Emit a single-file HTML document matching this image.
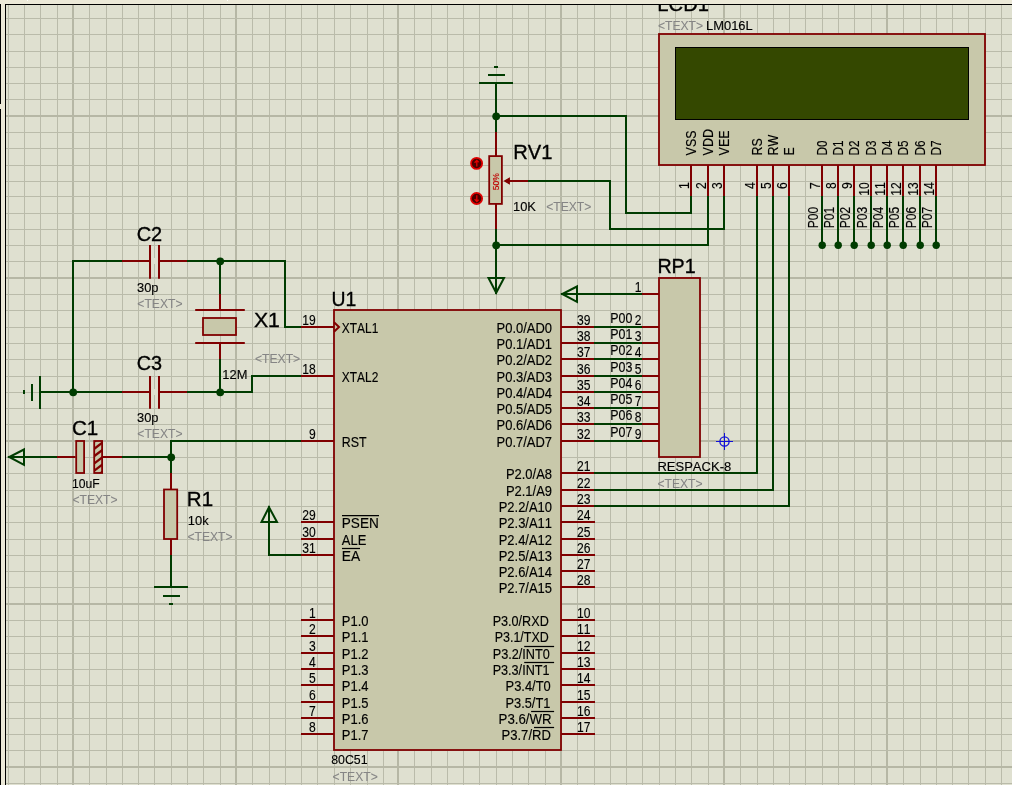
<!DOCTYPE html>
<html><head><meta charset="utf-8"><title>schematic</title>
<style>
html,body{margin:0;padding:0;background:#fff;}
body{width:1012px;height:787px;overflow:hidden;position:relative;font-family:"Liberation Sans", sans-serif;}
#frame{position:absolute;left:0;top:0;width:1012px;height:785px;background:#ece9d8;}
#sheet{position:absolute;left:5px;top:4px;width:1007px;height:781px;background:#dfe0d0;border-left:1px solid #000;border-top:1px solid #000;box-sizing:border-box;}
.lb{position:absolute;left:0;width:1px;background:#000;}
.tk{position:absolute;top:0;width:1px;height:1px;background:#fff;}
svg{position:absolute;left:0;top:0;filter:blur(0.35px);}
svg text{font-family:"Liberation Sans", sans-serif;font-kerning:none;}
</style></head><body>
<div id="frame"></div>
<div class="lb" style="top:4px;height:100px"></div>
<div class="lb" style="top:109px;height:676px"></div>
<div class="tk" style="left:27px"></div><div class="tk" style="left:227px"></div>
<div id="sheet"></div>
<svg width="1012" height="785" viewBox="0 0 1012 785">
<defs><clipPath id="cp"><rect x="6" y="5" width="1006" height="780"/></clipPath></defs>
<g clip-path="url(#cp)">
<line x1="8.5" y1="5" x2="8.5" y2="785" stroke="#babbaa" stroke-width="1" />
<line x1="24.5" y1="5" x2="24.5" y2="785" stroke="#babbaa" stroke-width="1" />
<line x1="40.5" y1="5" x2="40.5" y2="785" stroke="#babbaa" stroke-width="1" />
<line x1="57.5" y1="5" x2="57.5" y2="785" stroke="#babbaa" stroke-width="1" />
<line x1="73" y1="5" x2="73" y2="785" stroke="#b6b7a5" stroke-width="2" />
<line x1="89.5" y1="5" x2="89.5" y2="785" stroke="#babbaa" stroke-width="1" />
<line x1="106.5" y1="5" x2="106.5" y2="785" stroke="#babbaa" stroke-width="1" />
<line x1="122.5" y1="5" x2="122.5" y2="785" stroke="#babbaa" stroke-width="1" />
<line x1="138.5" y1="5" x2="138.5" y2="785" stroke="#babbaa" stroke-width="1" />
<line x1="154.5" y1="5" x2="154.5" y2="785" stroke="#babbaa" stroke-width="1" />
<line x1="171.5" y1="5" x2="171.5" y2="785" stroke="#babbaa" stroke-width="1" />
<line x1="187.5" y1="5" x2="187.5" y2="785" stroke="#babbaa" stroke-width="1" />
<line x1="203.5" y1="5" x2="203.5" y2="785" stroke="#babbaa" stroke-width="1" />
<line x1="220.5" y1="5" x2="220.5" y2="785" stroke="#babbaa" stroke-width="1" />
<line x1="236" y1="5" x2="236" y2="785" stroke="#b6b7a5" stroke-width="2" />
<line x1="252.5" y1="5" x2="252.5" y2="785" stroke="#babbaa" stroke-width="1" />
<line x1="269.5" y1="5" x2="269.5" y2="785" stroke="#babbaa" stroke-width="1" />
<line x1="285.5" y1="5" x2="285.5" y2="785" stroke="#babbaa" stroke-width="1" />
<line x1="301.5" y1="5" x2="301.5" y2="785" stroke="#babbaa" stroke-width="1" />
<line x1="317.5" y1="5" x2="317.5" y2="785" stroke="#babbaa" stroke-width="1" />
<line x1="334.5" y1="5" x2="334.5" y2="785" stroke="#babbaa" stroke-width="1" />
<line x1="350.5" y1="5" x2="350.5" y2="785" stroke="#babbaa" stroke-width="1" />
<line x1="367.5" y1="5" x2="367.5" y2="785" stroke="#babbaa" stroke-width="1" />
<line x1="383.5" y1="5" x2="383.5" y2="785" stroke="#babbaa" stroke-width="1" />
<line x1="398" y1="5" x2="398" y2="785" stroke="#b6b7a5" stroke-width="2" />
<line x1="414.5" y1="5" x2="414.5" y2="785" stroke="#babbaa" stroke-width="1" />
<line x1="431.5" y1="5" x2="431.5" y2="785" stroke="#babbaa" stroke-width="1" />
<line x1="447.5" y1="5" x2="447.5" y2="785" stroke="#babbaa" stroke-width="1" />
<line x1="463.5" y1="5" x2="463.5" y2="785" stroke="#babbaa" stroke-width="1" />
<line x1="479.5" y1="5" x2="479.5" y2="785" stroke="#babbaa" stroke-width="1" />
<line x1="496.5" y1="5" x2="496.5" y2="785" stroke="#babbaa" stroke-width="1" />
<line x1="512.5" y1="5" x2="512.5" y2="785" stroke="#babbaa" stroke-width="1" />
<line x1="528.5" y1="5" x2="528.5" y2="785" stroke="#babbaa" stroke-width="1" />
<line x1="545.5" y1="5" x2="545.5" y2="785" stroke="#babbaa" stroke-width="1" />
<line x1="561" y1="5" x2="561" y2="785" stroke="#b6b7a5" stroke-width="2" />
<line x1="577.5" y1="5" x2="577.5" y2="785" stroke="#babbaa" stroke-width="1" />
<line x1="594.5" y1="5" x2="594.5" y2="785" stroke="#babbaa" stroke-width="1" />
<line x1="610.5" y1="5" x2="610.5" y2="785" stroke="#babbaa" stroke-width="1" />
<line x1="626.5" y1="5" x2="626.5" y2="785" stroke="#babbaa" stroke-width="1" />
<line x1="642.5" y1="5" x2="642.5" y2="785" stroke="#babbaa" stroke-width="1" />
<line x1="659.5" y1="5" x2="659.5" y2="785" stroke="#babbaa" stroke-width="1" />
<line x1="675.5" y1="5" x2="675.5" y2="785" stroke="#babbaa" stroke-width="1" />
<line x1="691.5" y1="5" x2="691.5" y2="785" stroke="#babbaa" stroke-width="1" />
<line x1="708.5" y1="5" x2="708.5" y2="785" stroke="#babbaa" stroke-width="1" />
<line x1="724" y1="5" x2="724" y2="785" stroke="#b6b7a5" stroke-width="2" />
<line x1="740.5" y1="5" x2="740.5" y2="785" stroke="#babbaa" stroke-width="1" />
<line x1="757.5" y1="5" x2="757.5" y2="785" stroke="#babbaa" stroke-width="1" />
<line x1="773.5" y1="5" x2="773.5" y2="785" stroke="#babbaa" stroke-width="1" />
<line x1="789.5" y1="5" x2="789.5" y2="785" stroke="#babbaa" stroke-width="1" />
<line x1="805.5" y1="5" x2="805.5" y2="785" stroke="#babbaa" stroke-width="1" />
<line x1="822.5" y1="5" x2="822.5" y2="785" stroke="#babbaa" stroke-width="1" />
<line x1="838.5" y1="5" x2="838.5" y2="785" stroke="#babbaa" stroke-width="1" />
<line x1="854.5" y1="5" x2="854.5" y2="785" stroke="#babbaa" stroke-width="1" />
<line x1="871.5" y1="5" x2="871.5" y2="785" stroke="#babbaa" stroke-width="1" />
<line x1="887" y1="5" x2="887" y2="785" stroke="#b6b7a5" stroke-width="2" />
<line x1="903.5" y1="5" x2="903.5" y2="785" stroke="#babbaa" stroke-width="1" />
<line x1="920.5" y1="5" x2="920.5" y2="785" stroke="#babbaa" stroke-width="1" />
<line x1="936.5" y1="5" x2="936.5" y2="785" stroke="#babbaa" stroke-width="1" />
<line x1="952.5" y1="5" x2="952.5" y2="785" stroke="#babbaa" stroke-width="1" />
<line x1="968.5" y1="5" x2="968.5" y2="785" stroke="#babbaa" stroke-width="1" />
<line x1="985.5" y1="5" x2="985.5" y2="785" stroke="#babbaa" stroke-width="1" />
<line x1="1001.5" y1="5" x2="1001.5" y2="785" stroke="#babbaa" stroke-width="1" />
<line x1="6" y1="18.5" x2="1012" y2="18.5" stroke="#babbaa" stroke-width="1" />
<line x1="6" y1="34.5" x2="1012" y2="34.5" stroke="#babbaa" stroke-width="1" />
<line x1="6" y1="51.5" x2="1012" y2="51.5" stroke="#babbaa" stroke-width="1" />
<line x1="6" y1="67.5" x2="1012" y2="67.5" stroke="#babbaa" stroke-width="1" />
<line x1="6" y1="83.5" x2="1012" y2="83.5" stroke="#babbaa" stroke-width="1" />
<line x1="6" y1="99.5" x2="1012" y2="99.5" stroke="#babbaa" stroke-width="1" />
<line x1="6" y1="116" x2="1012" y2="116" stroke="#b6b7a5" stroke-width="2" />
<line x1="6" y1="132.5" x2="1012" y2="132.5" stroke="#babbaa" stroke-width="1" />
<line x1="6" y1="148.5" x2="1012" y2="148.5" stroke="#babbaa" stroke-width="1" />
<line x1="6" y1="165.5" x2="1012" y2="165.5" stroke="#babbaa" stroke-width="1" />
<line x1="6" y1="181.5" x2="1012" y2="181.5" stroke="#babbaa" stroke-width="1" />
<line x1="6" y1="196.5" x2="1012" y2="196.5" stroke="#babbaa" stroke-width="1" />
<line x1="6" y1="213.5" x2="1012" y2="213.5" stroke="#babbaa" stroke-width="1" />
<line x1="6" y1="229.5" x2="1012" y2="229.5" stroke="#babbaa" stroke-width="1" />
<line x1="6" y1="245.5" x2="1012" y2="245.5" stroke="#babbaa" stroke-width="1" />
<line x1="6" y1="261.5" x2="1012" y2="261.5" stroke="#babbaa" stroke-width="1" />
<line x1="6" y1="278" x2="1012" y2="278" stroke="#b6b7a5" stroke-width="2" />
<line x1="6" y1="294.5" x2="1012" y2="294.5" stroke="#babbaa" stroke-width="1" />
<line x1="6" y1="310.5" x2="1012" y2="310.5" stroke="#babbaa" stroke-width="1" />
<line x1="6" y1="327.5" x2="1012" y2="327.5" stroke="#babbaa" stroke-width="1" />
<line x1="6" y1="343.5" x2="1012" y2="343.5" stroke="#babbaa" stroke-width="1" />
<line x1="6" y1="359.5" x2="1012" y2="359.5" stroke="#babbaa" stroke-width="1" />
<line x1="6" y1="376.5" x2="1012" y2="376.5" stroke="#babbaa" stroke-width="1" />
<line x1="6" y1="392.5" x2="1012" y2="392.5" stroke="#babbaa" stroke-width="1" />
<line x1="6" y1="408.5" x2="1012" y2="408.5" stroke="#babbaa" stroke-width="1" />
<line x1="6" y1="424.5" x2="1012" y2="424.5" stroke="#babbaa" stroke-width="1" />
<line x1="6" y1="441" x2="1012" y2="441" stroke="#b6b7a5" stroke-width="2" />
<line x1="6" y1="457.5" x2="1012" y2="457.5" stroke="#babbaa" stroke-width="1" />
<line x1="6" y1="473.5" x2="1012" y2="473.5" stroke="#babbaa" stroke-width="1" />
<line x1="6" y1="490.5" x2="1012" y2="490.5" stroke="#babbaa" stroke-width="1" />
<line x1="6" y1="506.5" x2="1012" y2="506.5" stroke="#babbaa" stroke-width="1" />
<line x1="6" y1="522.5" x2="1012" y2="522.5" stroke="#babbaa" stroke-width="1" />
<line x1="6" y1="539.5" x2="1012" y2="539.5" stroke="#babbaa" stroke-width="1" />
<line x1="6" y1="555.5" x2="1012" y2="555.5" stroke="#babbaa" stroke-width="1" />
<line x1="6" y1="571.5" x2="1012" y2="571.5" stroke="#babbaa" stroke-width="1" />
<line x1="6" y1="587.5" x2="1012" y2="587.5" stroke="#babbaa" stroke-width="1" />
<line x1="6" y1="604" x2="1012" y2="604" stroke="#b6b7a5" stroke-width="2" />
<line x1="6" y1="620.5" x2="1012" y2="620.5" stroke="#babbaa" stroke-width="1" />
<line x1="6" y1="636.5" x2="1012" y2="636.5" stroke="#babbaa" stroke-width="1" />
<line x1="6" y1="653.5" x2="1012" y2="653.5" stroke="#babbaa" stroke-width="1" />
<line x1="6" y1="669.5" x2="1012" y2="669.5" stroke="#babbaa" stroke-width="1" />
<line x1="6" y1="685.5" x2="1012" y2="685.5" stroke="#babbaa" stroke-width="1" />
<line x1="6" y1="702.5" x2="1012" y2="702.5" stroke="#babbaa" stroke-width="1" />
<line x1="6" y1="718.5" x2="1012" y2="718.5" stroke="#babbaa" stroke-width="1" />
<line x1="6" y1="734.5" x2="1012" y2="734.5" stroke="#babbaa" stroke-width="1" />
<line x1="6" y1="750.5" x2="1012" y2="750.5" stroke="#babbaa" stroke-width="1" />
<line x1="6" y1="767" x2="1012" y2="767" stroke="#b6b7a5" stroke-width="2" />
<line x1="6" y1="783.5" x2="1012" y2="783.5" stroke="#babbaa" stroke-width="1" />
<rect x="334" y="310" width="227" height="440" fill="#c8c8aa" stroke="#800000" stroke-width="1.8"/>
<rect x="659" y="34" width="326" height="131" fill="#c8c8aa" stroke="#800000" stroke-width="1.8"/>
<rect x="675.5" y="47.5" width="293.0" height="72.0" fill="#344800" stroke="#000" stroke-width="1"/>
<rect x="659" y="278" width="41" height="179" fill="#c8c8aa" stroke="#800000" stroke-width="1.8"/>
<line x1="301" y1="327" x2="334" y2="327" stroke="#800000" stroke-width="2" />
<text transform="translate(315.7,324.9) scale(0.83,1)" font-size="14.6" fill="#000" text-anchor="end" stroke="#000" stroke-width="0.15" >19</text>
<text transform="translate(341.8,332.9) scale(0.865,1)" font-size="13.8" fill="#000" text-anchor="start" stroke="#000" stroke-width="0.15" id="L19">XTAL1</text>
<line x1="301" y1="376" x2="334" y2="376" stroke="#800000" stroke-width="2" />
<text transform="translate(315.7,373.9) scale(0.83,1)" font-size="14.6" fill="#000" text-anchor="end" stroke="#000" stroke-width="0.15" >18</text>
<text transform="translate(341.8,381.9) scale(0.865,1)" font-size="13.8" fill="#000" text-anchor="start" stroke="#000" stroke-width="0.15" id="L18">XTAL2</text>
<line x1="301" y1="441" x2="334" y2="441" stroke="#800000" stroke-width="2" />
<text transform="translate(315.7,438.9) scale(0.83,1)" font-size="14.6" fill="#000" text-anchor="end" stroke="#000" stroke-width="0.15" >9</text>
<text transform="translate(341.8,446.9) scale(0.9,1)" font-size="13.8" fill="#000" text-anchor="start" stroke="#000" stroke-width="0.15" id="L9">RST</text>
<line x1="301" y1="522" x2="334" y2="522" stroke="#800000" stroke-width="2" />
<text transform="translate(315.7,519.9) scale(0.83,1)" font-size="14.6" fill="#000" text-anchor="end" stroke="#000" stroke-width="0.15" >29</text>
<text transform="translate(341.8,527.9) scale(0.985,1)" font-size="13.8" fill="#000" text-anchor="start" stroke="#000" stroke-width="0.15" id="L29">PSEN</text>
<line x1="301" y1="539" x2="334" y2="539" stroke="#800000" stroke-width="2" />
<text transform="translate(315.7,536.9) scale(0.83,1)" font-size="14.6" fill="#000" text-anchor="end" stroke="#000" stroke-width="0.15" >30</text>
<text transform="translate(341.8,544.9) scale(0.94,1)" font-size="13.8" fill="#000" text-anchor="start" stroke="#000" stroke-width="0.15" id="L30">ALE</text>
<line x1="301" y1="555" x2="334" y2="555" stroke="#800000" stroke-width="2" />
<text transform="translate(315.7,552.9) scale(0.83,1)" font-size="14.6" fill="#000" text-anchor="end" stroke="#000" stroke-width="0.15" >31</text>
<text transform="translate(341.8,560.9)" font-size="13.8" fill="#000" text-anchor="start" stroke="#000" stroke-width="0.15" id="L31">EA</text>
<line x1="301" y1="620" x2="334" y2="620" stroke="#800000" stroke-width="2" />
<text transform="translate(315.7,617.9) scale(0.83,1)" font-size="14.6" fill="#000" text-anchor="end" stroke="#000" stroke-width="0.15" >1</text>
<text transform="translate(341.8,625.9) scale(0.94,1)" font-size="13.8" fill="#000" text-anchor="start" stroke="#000" stroke-width="0.15" id="L1">P1.0</text>
<line x1="301" y1="636" x2="334" y2="636" stroke="#800000" stroke-width="2" />
<text transform="translate(315.7,633.9) scale(0.83,1)" font-size="14.6" fill="#000" text-anchor="end" stroke="#000" stroke-width="0.15" >2</text>
<text transform="translate(341.8,641.9) scale(0.94,1)" font-size="13.8" fill="#000" text-anchor="start" stroke="#000" stroke-width="0.15" id="L2">P1.1</text>
<line x1="301" y1="653" x2="334" y2="653" stroke="#800000" stroke-width="2" />
<text transform="translate(315.7,650.9) scale(0.83,1)" font-size="14.6" fill="#000" text-anchor="end" stroke="#000" stroke-width="0.15" >3</text>
<text transform="translate(341.8,658.9) scale(0.94,1)" font-size="13.8" fill="#000" text-anchor="start" stroke="#000" stroke-width="0.15" id="L3">P1.2</text>
<line x1="301" y1="669" x2="334" y2="669" stroke="#800000" stroke-width="2" />
<text transform="translate(315.7,666.9) scale(0.83,1)" font-size="14.6" fill="#000" text-anchor="end" stroke="#000" stroke-width="0.15" >4</text>
<text transform="translate(341.8,674.9) scale(0.94,1)" font-size="13.8" fill="#000" text-anchor="start" stroke="#000" stroke-width="0.15" id="L4">P1.3</text>
<line x1="301" y1="685" x2="334" y2="685" stroke="#800000" stroke-width="2" />
<text transform="translate(315.7,682.9) scale(0.83,1)" font-size="14.6" fill="#000" text-anchor="end" stroke="#000" stroke-width="0.15" >5</text>
<text transform="translate(341.8,690.9) scale(0.94,1)" font-size="13.8" fill="#000" text-anchor="start" stroke="#000" stroke-width="0.15" id="L5">P1.4</text>
<line x1="301" y1="702" x2="334" y2="702" stroke="#800000" stroke-width="2" />
<text transform="translate(315.7,699.9) scale(0.83,1)" font-size="14.6" fill="#000" text-anchor="end" stroke="#000" stroke-width="0.15" >6</text>
<text transform="translate(341.8,707.9) scale(0.94,1)" font-size="13.8" fill="#000" text-anchor="start" stroke="#000" stroke-width="0.15" id="L6">P1.5</text>
<line x1="301" y1="718" x2="334" y2="718" stroke="#800000" stroke-width="2" />
<text transform="translate(315.7,715.9) scale(0.83,1)" font-size="14.6" fill="#000" text-anchor="end" stroke="#000" stroke-width="0.15" >7</text>
<text transform="translate(341.8,723.9) scale(0.94,1)" font-size="13.8" fill="#000" text-anchor="start" stroke="#000" stroke-width="0.15" id="L7">P1.6</text>
<line x1="301" y1="734" x2="334" y2="734" stroke="#800000" stroke-width="2" />
<text transform="translate(315.7,731.9) scale(0.83,1)" font-size="14.6" fill="#000" text-anchor="end" stroke="#000" stroke-width="0.15" >8</text>
<text transform="translate(341.8,739.9) scale(0.94,1)" font-size="13.8" fill="#000" text-anchor="start" stroke="#000" stroke-width="0.15" id="L8">P1.7</text>
<line x1="561" y1="327" x2="595" y2="327" stroke="#800000" stroke-width="2" />
<text transform="translate(577.0,324.9) scale(0.83,1)" font-size="14.6" fill="#000" text-anchor="start" stroke="#000" stroke-width="0.15" >39</text>
<text transform="translate(552.0,332.9) scale(0.94,1)" font-size="13.8" fill="#000" text-anchor="end" stroke="#000" stroke-width="0.15" id="R39">P0.0/AD0</text>
<line x1="561" y1="343" x2="595" y2="343" stroke="#800000" stroke-width="2" />
<text transform="translate(577.0,340.9) scale(0.83,1)" font-size="14.6" fill="#000" text-anchor="start" stroke="#000" stroke-width="0.15" >38</text>
<text transform="translate(552.0,348.9) scale(0.94,1)" font-size="13.8" fill="#000" text-anchor="end" stroke="#000" stroke-width="0.15" id="R38">P0.1/AD1</text>
<line x1="561" y1="359" x2="595" y2="359" stroke="#800000" stroke-width="2" />
<text transform="translate(577.0,356.9) scale(0.83,1)" font-size="14.6" fill="#000" text-anchor="start" stroke="#000" stroke-width="0.15" >37</text>
<text transform="translate(552.0,364.9) scale(0.94,1)" font-size="13.8" fill="#000" text-anchor="end" stroke="#000" stroke-width="0.15" id="R37">P0.2/AD2</text>
<line x1="561" y1="376" x2="595" y2="376" stroke="#800000" stroke-width="2" />
<text transform="translate(577.0,373.9) scale(0.83,1)" font-size="14.6" fill="#000" text-anchor="start" stroke="#000" stroke-width="0.15" >36</text>
<text transform="translate(552.0,381.9) scale(0.94,1)" font-size="13.8" fill="#000" text-anchor="end" stroke="#000" stroke-width="0.15" id="R36">P0.3/AD3</text>
<line x1="561" y1="392" x2="595" y2="392" stroke="#800000" stroke-width="2" />
<text transform="translate(577.0,389.9) scale(0.83,1)" font-size="14.6" fill="#000" text-anchor="start" stroke="#000" stroke-width="0.15" >35</text>
<text transform="translate(552.0,397.9) scale(0.94,1)" font-size="13.8" fill="#000" text-anchor="end" stroke="#000" stroke-width="0.15" id="R35">P0.4/AD4</text>
<line x1="561" y1="408" x2="595" y2="408" stroke="#800000" stroke-width="2" />
<text transform="translate(577.0,405.9) scale(0.83,1)" font-size="14.6" fill="#000" text-anchor="start" stroke="#000" stroke-width="0.15" >34</text>
<text transform="translate(552.0,413.9) scale(0.94,1)" font-size="13.8" fill="#000" text-anchor="end" stroke="#000" stroke-width="0.15" id="R34">P0.5/AD5</text>
<line x1="561" y1="424" x2="595" y2="424" stroke="#800000" stroke-width="2" />
<text transform="translate(577.0,421.9) scale(0.83,1)" font-size="14.6" fill="#000" text-anchor="start" stroke="#000" stroke-width="0.15" >33</text>
<text transform="translate(552.0,429.9) scale(0.94,1)" font-size="13.8" fill="#000" text-anchor="end" stroke="#000" stroke-width="0.15" id="R33">P0.6/AD6</text>
<line x1="561" y1="441" x2="595" y2="441" stroke="#800000" stroke-width="2" />
<text transform="translate(577.0,438.9) scale(0.83,1)" font-size="14.6" fill="#000" text-anchor="start" stroke="#000" stroke-width="0.15" >32</text>
<text transform="translate(552.0,446.9) scale(0.94,1)" font-size="13.8" fill="#000" text-anchor="end" stroke="#000" stroke-width="0.15" id="R32">P0.7/AD7</text>
<line x1="561" y1="473" x2="595" y2="473" stroke="#800000" stroke-width="2" />
<text transform="translate(577.0,470.9) scale(0.83,1)" font-size="14.6" fill="#000" text-anchor="start" stroke="#000" stroke-width="0.15" >21</text>
<text transform="translate(552.0,478.9) scale(0.94,1)" font-size="13.8" fill="#000" text-anchor="end" stroke="#000" stroke-width="0.15" id="R21">P2.0/A8</text>
<line x1="561" y1="490" x2="595" y2="490" stroke="#800000" stroke-width="2" />
<text transform="translate(577.0,487.9) scale(0.83,1)" font-size="14.6" fill="#000" text-anchor="start" stroke="#000" stroke-width="0.15" >22</text>
<text transform="translate(552.0,495.9) scale(0.94,1)" font-size="13.8" fill="#000" text-anchor="end" stroke="#000" stroke-width="0.15" id="R22">P2.1/A9</text>
<line x1="561" y1="506" x2="595" y2="506" stroke="#800000" stroke-width="2" />
<text transform="translate(577.0,503.9) scale(0.83,1)" font-size="14.6" fill="#000" text-anchor="start" stroke="#000" stroke-width="0.15" >23</text>
<text transform="translate(552.0,511.9) scale(0.94,1)" font-size="13.8" fill="#000" text-anchor="end" stroke="#000" stroke-width="0.15" id="R23">P2.2/A10</text>
<line x1="561" y1="522" x2="595" y2="522" stroke="#800000" stroke-width="2" />
<text transform="translate(577.0,519.9) scale(0.83,1)" font-size="14.6" fill="#000" text-anchor="start" stroke="#000" stroke-width="0.15" >24</text>
<text transform="translate(552.0,527.9) scale(0.94,1)" font-size="13.8" fill="#000" text-anchor="end" stroke="#000" stroke-width="0.15" id="R24">P2.3/A11</text>
<line x1="561" y1="539" x2="595" y2="539" stroke="#800000" stroke-width="2" />
<text transform="translate(577.0,536.9) scale(0.83,1)" font-size="14.6" fill="#000" text-anchor="start" stroke="#000" stroke-width="0.15" >25</text>
<text transform="translate(552.0,544.9) scale(0.94,1)" font-size="13.8" fill="#000" text-anchor="end" stroke="#000" stroke-width="0.15" id="R25">P2.4/A12</text>
<line x1="561" y1="555" x2="595" y2="555" stroke="#800000" stroke-width="2" />
<text transform="translate(577.0,552.9) scale(0.83,1)" font-size="14.6" fill="#000" text-anchor="start" stroke="#000" stroke-width="0.15" >26</text>
<text transform="translate(552.0,560.9) scale(0.94,1)" font-size="13.8" fill="#000" text-anchor="end" stroke="#000" stroke-width="0.15" id="R26">P2.5/A13</text>
<line x1="561" y1="571" x2="595" y2="571" stroke="#800000" stroke-width="2" />
<text transform="translate(577.0,568.9) scale(0.83,1)" font-size="14.6" fill="#000" text-anchor="start" stroke="#000" stroke-width="0.15" >27</text>
<text transform="translate(552.0,576.9) scale(0.94,1)" font-size="13.8" fill="#000" text-anchor="end" stroke="#000" stroke-width="0.15" id="R27">P2.6/A14</text>
<line x1="561" y1="587" x2="595" y2="587" stroke="#800000" stroke-width="2" />
<text transform="translate(577.0,584.9) scale(0.83,1)" font-size="14.6" fill="#000" text-anchor="start" stroke="#000" stroke-width="0.15" >28</text>
<text transform="translate(552.0,592.9) scale(0.94,1)" font-size="13.8" fill="#000" text-anchor="end" stroke="#000" stroke-width="0.15" id="R28">P2.7/A15</text>
<line x1="561" y1="620" x2="595" y2="620" stroke="#800000" stroke-width="2" />
<text transform="translate(577.0,617.9) scale(0.83,1)" font-size="14.6" fill="#000" text-anchor="start" stroke="#000" stroke-width="0.15" >10</text>
<text transform="translate(492.66,625.9) scale(0.9149,1)" font-size="13.8" fill="#000" text-anchor="start" stroke="#000" stroke-width="0.15" >P3.0/RXD</text>
<line x1="561" y1="636" x2="595" y2="636" stroke="#800000" stroke-width="2" />
<text transform="translate(577.0,633.9) scale(0.83,1)" font-size="14.6" fill="#000" text-anchor="start" stroke="#000" stroke-width="0.15" >11</text>
<text transform="translate(494.78,641.9) scale(0.903,1)" font-size="13.8" fill="#000" text-anchor="start" stroke="#000" stroke-width="0.15" >P3.1/TXD</text>
<line x1="561" y1="653" x2="595" y2="653" stroke="#800000" stroke-width="2" />
<text transform="translate(577.0,650.9) scale(0.83,1)" font-size="14.6" fill="#000" text-anchor="start" stroke="#000" stroke-width="0.15" >12</text>
<text transform="translate(492.66,658.9) scale(0.9213,1)" font-size="13.8" fill="#000" text-anchor="start" stroke="#000" stroke-width="0.15" >P3.2/INT0</text>
<line x1="561" y1="669" x2="595" y2="669" stroke="#800000" stroke-width="2" />
<text transform="translate(577.0,666.9) scale(0.83,1)" font-size="14.6" fill="#000" text-anchor="start" stroke="#000" stroke-width="0.15" >13</text>
<text transform="translate(492.66,674.9) scale(0.9151,1)" font-size="13.8" fill="#000" text-anchor="start" stroke="#000" stroke-width="0.15" >P3.3/INT1</text>
<line x1="561" y1="685" x2="595" y2="685" stroke="#800000" stroke-width="2" />
<text transform="translate(577.0,682.9) scale(0.83,1)" font-size="14.6" fill="#000" text-anchor="start" stroke="#000" stroke-width="0.15" >14</text>
<text transform="translate(505.54,690.9) scale(0.9366,1)" font-size="13.8" fill="#000" text-anchor="start" stroke="#000" stroke-width="0.15" >P3.4/T0</text>
<line x1="561" y1="702" x2="595" y2="702" stroke="#800000" stroke-width="2" />
<text transform="translate(577.0,699.9) scale(0.83,1)" font-size="14.6" fill="#000" text-anchor="start" stroke="#000" stroke-width="0.15" >15</text>
<text transform="translate(505.55,707.9) scale(0.9286,1)" font-size="13.8" fill="#000" text-anchor="start" stroke="#000" stroke-width="0.15" >P3.5/T1</text>
<line x1="561" y1="718" x2="595" y2="718" stroke="#800000" stroke-width="2" />
<text transform="translate(577.0,715.9) scale(0.83,1)" font-size="14.6" fill="#000" text-anchor="start" stroke="#000" stroke-width="0.15" >16</text>
<text transform="translate(498.61,723.9) scale(0.9618,1)" font-size="13.8" fill="#000" text-anchor="start" stroke="#000" stroke-width="0.15" >P3.6/WR</text>
<line x1="561" y1="734" x2="595" y2="734" stroke="#800000" stroke-width="2" />
<text transform="translate(577.0,731.9) scale(0.83,1)" font-size="14.6" fill="#000" text-anchor="start" stroke="#000" stroke-width="0.15" >17</text>
<text transform="translate(501.53,739.9) scale(0.9471,1)" font-size="13.8" fill="#000" text-anchor="start" stroke="#000" stroke-width="0.15" >P3.7/RD</text>
<line x1="342" y1="515.5" x2="379" y2="515.5" stroke="#000" stroke-width="1.25" />
<line x1="342" y1="548.5" x2="360" y2="548.5" stroke="#000" stroke-width="1.25" />
<line x1="524.2" y1="646.5" x2="554.1" y2="646.5" stroke="#000" stroke-width="1.25" />
<line x1="524.2" y1="662.5" x2="554.1" y2="662.5" stroke="#000" stroke-width="1.25" />
<line x1="531.1" y1="711.5" x2="554.1" y2="711.5" stroke="#000" stroke-width="1.25" />
<line x1="534.0" y1="727.5" x2="554.1" y2="727.5" stroke="#000" stroke-width="1.25" />
<polyline points="334,322.2 339.0,327 334,331.8" fill="none" stroke="#800000" stroke-width="2" stroke-linejoin="miter"/>
<line x1="594" y1="327" x2="642" y2="327" stroke="#003c00" stroke-width="2" />
<line x1="642" y1="327" x2="659" y2="327" stroke="#800000" stroke-width="2" />
<text transform="translate(610.3,323.4) scale(0.9,1)" font-size="13.8" fill="#000" text-anchor="start" stroke="#000" stroke-width="0.15" >P00</text>
<text transform="translate(641.6,324.6) scale(0.83,1)" font-size="14.6" fill="#000" text-anchor="end" stroke="#000" stroke-width="0.15" >2</text>
<line x1="594" y1="343" x2="642" y2="343" stroke="#003c00" stroke-width="2" />
<line x1="642" y1="343" x2="659" y2="343" stroke="#800000" stroke-width="2" />
<text transform="translate(610.3,339.4) scale(0.9,1)" font-size="13.8" fill="#000" text-anchor="start" stroke="#000" stroke-width="0.15" >P01</text>
<text transform="translate(641.6,340.6) scale(0.83,1)" font-size="14.6" fill="#000" text-anchor="end" stroke="#000" stroke-width="0.15" >3</text>
<line x1="594" y1="359" x2="642" y2="359" stroke="#003c00" stroke-width="2" />
<line x1="642" y1="359" x2="659" y2="359" stroke="#800000" stroke-width="2" />
<text transform="translate(610.3,355.4) scale(0.9,1)" font-size="13.8" fill="#000" text-anchor="start" stroke="#000" stroke-width="0.15" >P02</text>
<text transform="translate(641.6,356.6) scale(0.83,1)" font-size="14.6" fill="#000" text-anchor="end" stroke="#000" stroke-width="0.15" >4</text>
<line x1="594" y1="376" x2="642" y2="376" stroke="#003c00" stroke-width="2" />
<line x1="642" y1="376" x2="659" y2="376" stroke="#800000" stroke-width="2" />
<text transform="translate(610.3,372.4) scale(0.9,1)" font-size="13.8" fill="#000" text-anchor="start" stroke="#000" stroke-width="0.15" >P03</text>
<text transform="translate(641.6,373.6) scale(0.83,1)" font-size="14.6" fill="#000" text-anchor="end" stroke="#000" stroke-width="0.15" >5</text>
<line x1="594" y1="392" x2="642" y2="392" stroke="#003c00" stroke-width="2" />
<line x1="642" y1="392" x2="659" y2="392" stroke="#800000" stroke-width="2" />
<text transform="translate(610.3,388.4) scale(0.9,1)" font-size="13.8" fill="#000" text-anchor="start" stroke="#000" stroke-width="0.15" >P04</text>
<text transform="translate(641.6,389.6) scale(0.83,1)" font-size="14.6" fill="#000" text-anchor="end" stroke="#000" stroke-width="0.15" >6</text>
<line x1="594" y1="408" x2="642" y2="408" stroke="#003c00" stroke-width="2" />
<line x1="642" y1="408" x2="659" y2="408" stroke="#800000" stroke-width="2" />
<text transform="translate(610.3,404.4) scale(0.9,1)" font-size="13.8" fill="#000" text-anchor="start" stroke="#000" stroke-width="0.15" >P05</text>
<text transform="translate(641.6,405.6) scale(0.83,1)" font-size="14.6" fill="#000" text-anchor="end" stroke="#000" stroke-width="0.15" >7</text>
<line x1="594" y1="424" x2="642" y2="424" stroke="#003c00" stroke-width="2" />
<line x1="642" y1="424" x2="659" y2="424" stroke="#800000" stroke-width="2" />
<text transform="translate(610.3,420.4) scale(0.9,1)" font-size="13.8" fill="#000" text-anchor="start" stroke="#000" stroke-width="0.15" >P06</text>
<text transform="translate(641.6,421.6) scale(0.83,1)" font-size="14.6" fill="#000" text-anchor="end" stroke="#000" stroke-width="0.15" >8</text>
<line x1="594" y1="441" x2="642" y2="441" stroke="#003c00" stroke-width="2" />
<line x1="642" y1="441" x2="659" y2="441" stroke="#800000" stroke-width="2" />
<text transform="translate(610.3,437.4) scale(0.9,1)" font-size="13.8" fill="#000" text-anchor="start" stroke="#000" stroke-width="0.15" >P07</text>
<text transform="translate(641.6,438.6) scale(0.83,1)" font-size="14.6" fill="#000" text-anchor="end" stroke="#000" stroke-width="0.15" >9</text>
<line x1="642" y1="294" x2="659" y2="294" stroke="#800000" stroke-width="2" />
<line x1="561" y1="294" x2="642" y2="294" stroke="#003c00" stroke-width="2" />
<polygon points="577,286.5 562.2,294 577,301.8" fill="none" stroke="#003c00" stroke-width="2" stroke-linejoin="miter"/>
<text transform="translate(641.6,291.6) scale(0.83,1)" font-size="14.6" fill="#000" text-anchor="end" stroke="#000" stroke-width="0.15" >1</text>
<polyline points="594,473 757,473 757,196" fill="none" stroke="#003c00" stroke-width="2" stroke-linejoin="miter"/>
<polyline points="594,490 773,490 773,196" fill="none" stroke="#003c00" stroke-width="2" stroke-linejoin="miter"/>
<polyline points="594,506 789,506 789,196" fill="none" stroke="#003c00" stroke-width="2" stroke-linejoin="miter"/>
<line x1="691" y1="165" x2="691" y2="196" stroke="#800000" stroke-width="2" />
<text transform="translate(688.7,182.3) rotate(-90) scale(0.83,1)" font-size="14.6" fill="#000" text-anchor="end" stroke="#000" stroke-width="0.15" >1</text>
<text transform="translate(695.9,155.4) rotate(-90) scale(0.905,1)" font-size="13.8" fill="#000" text-anchor="start" stroke="#000" stroke-width="0.15" >VSS</text>
<line x1="708" y1="165" x2="708" y2="196" stroke="#800000" stroke-width="2" />
<text transform="translate(705.7,182.3) rotate(-90) scale(0.83,1)" font-size="14.6" fill="#000" text-anchor="end" stroke="#000" stroke-width="0.15" >2</text>
<text transform="translate(712.9,155.4) rotate(-90) scale(0.905,1)" font-size="13.8" fill="#000" text-anchor="start" stroke="#000" stroke-width="0.15" >VDD</text>
<line x1="724" y1="165" x2="724" y2="196" stroke="#800000" stroke-width="2" />
<text transform="translate(721.7,182.3) rotate(-90) scale(0.83,1)" font-size="14.6" fill="#000" text-anchor="end" stroke="#000" stroke-width="0.15" >3</text>
<text transform="translate(728.9,155.4) rotate(-90) scale(0.905,1)" font-size="13.8" fill="#000" text-anchor="start" stroke="#000" stroke-width="0.15" >VEE</text>
<line x1="757" y1="165" x2="757" y2="196" stroke="#800000" stroke-width="2" />
<text transform="translate(754.7,182.3) rotate(-90) scale(0.83,1)" font-size="14.6" fill="#000" text-anchor="end" stroke="#000" stroke-width="0.15" >4</text>
<text transform="translate(761.9,155.4) rotate(-90) scale(0.905,1)" font-size="13.8" fill="#000" text-anchor="start" stroke="#000" stroke-width="0.15" >RS</text>
<line x1="773" y1="165" x2="773" y2="196" stroke="#800000" stroke-width="2" />
<text transform="translate(770.7,182.3) rotate(-90) scale(0.83,1)" font-size="14.6" fill="#000" text-anchor="end" stroke="#000" stroke-width="0.15" >5</text>
<text transform="translate(777.9,155.4) rotate(-90) scale(0.905,1)" font-size="13.8" fill="#000" text-anchor="start" stroke="#000" stroke-width="0.15" >RW</text>
<line x1="789" y1="165" x2="789" y2="196" stroke="#800000" stroke-width="2" />
<text transform="translate(786.7,182.3) rotate(-90) scale(0.83,1)" font-size="14.6" fill="#000" text-anchor="end" stroke="#000" stroke-width="0.15" >6</text>
<text transform="translate(793.9,155.4) rotate(-90) scale(0.905,1)" font-size="13.8" fill="#000" text-anchor="start" stroke="#000" stroke-width="0.15" >E</text>
<line x1="822" y1="165" x2="822" y2="196" stroke="#800000" stroke-width="2" />
<text transform="translate(819.7,182.3) rotate(-90) scale(0.83,1)" font-size="14.6" fill="#000" text-anchor="end" stroke="#000" stroke-width="0.15" >7</text>
<text transform="translate(826.9,155.4) rotate(-90) scale(0.85,1)" font-size="13.8" fill="#000" text-anchor="start" stroke="#000" stroke-width="0.15" >D0</text>
<line x1="838" y1="165" x2="838" y2="196" stroke="#800000" stroke-width="2" />
<text transform="translate(835.7,182.3) rotate(-90) scale(0.83,1)" font-size="14.6" fill="#000" text-anchor="end" stroke="#000" stroke-width="0.15" >8</text>
<text transform="translate(842.9,155.4) rotate(-90) scale(0.85,1)" font-size="13.8" fill="#000" text-anchor="start" stroke="#000" stroke-width="0.15" >D1</text>
<line x1="854" y1="165" x2="854" y2="196" stroke="#800000" stroke-width="2" />
<text transform="translate(851.7,182.3) rotate(-90) scale(0.83,1)" font-size="14.6" fill="#000" text-anchor="end" stroke="#000" stroke-width="0.15" >9</text>
<text transform="translate(858.9,155.4) rotate(-90) scale(0.85,1)" font-size="13.8" fill="#000" text-anchor="start" stroke="#000" stroke-width="0.15" >D2</text>
<line x1="871" y1="165" x2="871" y2="196" stroke="#800000" stroke-width="2" />
<text transform="translate(868.7,182.3) rotate(-90) scale(0.83,1)" font-size="14.6" fill="#000" text-anchor="end" stroke="#000" stroke-width="0.15" >10</text>
<text transform="translate(875.9,155.4) rotate(-90) scale(0.85,1)" font-size="13.8" fill="#000" text-anchor="start" stroke="#000" stroke-width="0.15" >D3</text>
<line x1="887" y1="165" x2="887" y2="196" stroke="#800000" stroke-width="2" />
<text transform="translate(884.7,182.3) rotate(-90) scale(0.83,1)" font-size="14.6" fill="#000" text-anchor="end" stroke="#000" stroke-width="0.15" >11</text>
<text transform="translate(891.9,155.4) rotate(-90) scale(0.85,1)" font-size="13.8" fill="#000" text-anchor="start" stroke="#000" stroke-width="0.15" >D4</text>
<line x1="903" y1="165" x2="903" y2="196" stroke="#800000" stroke-width="2" />
<text transform="translate(900.7,182.3) rotate(-90) scale(0.83,1)" font-size="14.6" fill="#000" text-anchor="end" stroke="#000" stroke-width="0.15" >12</text>
<text transform="translate(907.9,155.4) rotate(-90) scale(0.85,1)" font-size="13.8" fill="#000" text-anchor="start" stroke="#000" stroke-width="0.15" >D5</text>
<line x1="920" y1="165" x2="920" y2="196" stroke="#800000" stroke-width="2" />
<text transform="translate(917.7,182.3) rotate(-90) scale(0.83,1)" font-size="14.6" fill="#000" text-anchor="end" stroke="#000" stroke-width="0.15" >13</text>
<text transform="translate(924.9,155.4) rotate(-90) scale(0.85,1)" font-size="13.8" fill="#000" text-anchor="start" stroke="#000" stroke-width="0.15" >D6</text>
<line x1="936" y1="165" x2="936" y2="196" stroke="#800000" stroke-width="2" />
<text transform="translate(933.7,182.3) rotate(-90) scale(0.83,1)" font-size="14.6" fill="#000" text-anchor="end" stroke="#000" stroke-width="0.15" >14</text>
<text transform="translate(940.9,155.4) rotate(-90) scale(0.85,1)" font-size="13.8" fill="#000" text-anchor="start" stroke="#000" stroke-width="0.15" >D7</text>
<line x1="822" y1="196" x2="822" y2="245" stroke="#003c00" stroke-width="2" />
<circle cx="822.2" cy="245.3" r="3.7" fill="#003c00"/>
<text transform="translate(817.6,228.2) rotate(-90) scale(0.87,1)" font-size="13.8" fill="#000" text-anchor="start" stroke="#000" stroke-width="0.15" >P00</text>
<line x1="838" y1="196" x2="838" y2="245" stroke="#003c00" stroke-width="2" />
<circle cx="838.2" cy="245.3" r="3.7" fill="#003c00"/>
<text transform="translate(833.6,228.2) rotate(-90) scale(0.87,1)" font-size="13.8" fill="#000" text-anchor="start" stroke="#000" stroke-width="0.15" >P01</text>
<line x1="854" y1="196" x2="854" y2="245" stroke="#003c00" stroke-width="2" />
<circle cx="854.2" cy="245.3" r="3.7" fill="#003c00"/>
<text transform="translate(849.6,228.2) rotate(-90) scale(0.87,1)" font-size="13.8" fill="#000" text-anchor="start" stroke="#000" stroke-width="0.15" >P02</text>
<line x1="871" y1="196" x2="871" y2="245" stroke="#003c00" stroke-width="2" />
<circle cx="871.2" cy="245.3" r="3.7" fill="#003c00"/>
<text transform="translate(866.6,228.2) rotate(-90) scale(0.87,1)" font-size="13.8" fill="#000" text-anchor="start" stroke="#000" stroke-width="0.15" >P03</text>
<line x1="887" y1="196" x2="887" y2="245" stroke="#003c00" stroke-width="2" />
<circle cx="887.2" cy="245.3" r="3.7" fill="#003c00"/>
<text transform="translate(882.6,228.2) rotate(-90) scale(0.87,1)" font-size="13.8" fill="#000" text-anchor="start" stroke="#000" stroke-width="0.15" >P04</text>
<line x1="903" y1="196" x2="903" y2="245" stroke="#003c00" stroke-width="2" />
<circle cx="903.2" cy="245.3" r="3.7" fill="#003c00"/>
<text transform="translate(898.6,228.2) rotate(-90) scale(0.87,1)" font-size="13.8" fill="#000" text-anchor="start" stroke="#000" stroke-width="0.15" >P05</text>
<line x1="920" y1="196" x2="920" y2="245" stroke="#003c00" stroke-width="2" />
<circle cx="920.2" cy="245.3" r="3.7" fill="#003c00"/>
<text transform="translate(915.6,228.2) rotate(-90) scale(0.87,1)" font-size="13.8" fill="#000" text-anchor="start" stroke="#000" stroke-width="0.15" >P06</text>
<line x1="936" y1="196" x2="936" y2="245" stroke="#003c00" stroke-width="2" />
<circle cx="936.2" cy="245.3" r="3.7" fill="#003c00"/>
<text transform="translate(931.6,228.2) rotate(-90) scale(0.87,1)" font-size="13.8" fill="#000" text-anchor="start" stroke="#000" stroke-width="0.15" >P07</text>
<line x1="479" y1="83" x2="513" y2="83" stroke="#003c00" stroke-width="2" />
<line x1="488" y1="75" x2="505" y2="75" stroke="#003c00" stroke-width="2" />
<line x1="494" y1="67" x2="498" y2="67" stroke="#003c00" stroke-width="2" />
<line x1="496" y1="83" x2="496" y2="132" stroke="#003c00" stroke-width="2" />
<line x1="496" y1="132" x2="496" y2="156" stroke="#800000" stroke-width="2" />
<rect x="489.2" y="156.1" width="12.7" height="47.8" fill="#c8c8aa" stroke="#800000" stroke-width="1.8"/>
<line x1="496" y1="204" x2="496" y2="229" stroke="#800000" stroke-width="2" />
<line x1="496" y1="229" x2="496" y2="294" stroke="#003c00" stroke-width="2" />
<polygon points="488.5,278 504,278 496.2,292.8" fill="none" stroke="#003c00" stroke-width="2" stroke-linejoin="miter"/>
<circle cx="496.2" cy="116.3" r="3.9" fill="#003c00"/>
<circle cx="496.2" cy="245.3" r="3.9" fill="#003c00"/>
<line x1="506" y1="181" x2="528" y2="181" stroke="#800000" stroke-width="2" />
<polygon points="509.3,178.2 504.6,181 509.3,183.8" fill="#800000" stroke="#800000" stroke-width="1.2" stroke-linejoin="miter"/>
<polyline points="528,181 610,181 610,229 724,229 724,196" fill="none" stroke="#003c00" stroke-width="2" stroke-linejoin="miter"/>
<polyline points="496,116 626,116 626,213 691,213 691,196" fill="none" stroke="#003c00" stroke-width="2" stroke-linejoin="miter"/>
<polyline points="496,245 708,245 708,196" fill="none" stroke="#003c00" stroke-width="2" stroke-linejoin="miter"/>
<circle cx="476.6" cy="163.4" r="5.6" fill="#4a0000" stroke="#e00000" stroke-width="1.7"/>
<path d="M476.8 166.6 V160.8 M474.6 162.8 L476.8 160.4 L478.6 162.20000000000002" stroke="#e80000" stroke-width="1.3" fill="none"/>
<circle cx="476.6" cy="198.5" r="5.6" fill="#4a0000" stroke="#e00000" stroke-width="1.7"/>
<path d="M476.8 195.3 V201.1 M474.6 199.1 L476.8 201.5 L478.6 199.7" stroke="#e80000" stroke-width="1.3" fill="none"/>
<text transform="translate(499.2,190.2) rotate(-90) scale(0.93,1)" font-size="9.2" fill="#c00000" text-anchor="start" stroke="#c00000" stroke-width="0.15" >50%</text>
<line x1="122" y1="261" x2="187" y2="261" stroke="#800000" stroke-width="2" />
<rect x="150.9" y="258" width="7.2" height="6" fill="#dfe0d0" stroke="none" stroke-width="0"/>
<line x1="150.0" y1="245" x2="150.0" y2="278.8" stroke="#800000" stroke-width="2" />
<line x1="159.0" y1="245" x2="159.0" y2="278.8" stroke="#800000" stroke-width="2" />
<line x1="122" y1="392" x2="187" y2="392" stroke="#800000" stroke-width="2" />
<rect x="150.9" y="389" width="7.2" height="6" fill="#dfe0d0" stroke="none" stroke-width="0"/>
<line x1="150.0" y1="376" x2="150.0" y2="408.8" stroke="#800000" stroke-width="2" />
<line x1="159.0" y1="376" x2="159.0" y2="408.8" stroke="#800000" stroke-width="2" />
<polyline points="122,261 73,261 73,392" fill="none" stroke="#003c00" stroke-width="2" stroke-linejoin="miter"/>
<line x1="40" y1="392" x2="122" y2="392" stroke="#003c00" stroke-width="2" />
<polyline points="187,261 285,261 285,327 301,327" fill="none" stroke="#003c00" stroke-width="2" stroke-linejoin="miter"/>
<polyline points="187,392 252,392 252,376 301,376" fill="none" stroke="#003c00" stroke-width="2" stroke-linejoin="miter"/>
<line x1="40" y1="376" x2="40" y2="409" stroke="#003c00" stroke-width="2" />
<line x1="32" y1="384" x2="32" y2="401" stroke="#003c00" stroke-width="2" />
<line x1="24" y1="390" x2="24" y2="394" stroke="#003c00" stroke-width="2" />
<line x1="220" y1="261" x2="220" y2="294" stroke="#003c00" stroke-width="2" />
<line x1="220" y1="294" x2="220" y2="310" stroke="#800000" stroke-width="2" />
<line x1="220" y1="343" x2="220" y2="359" stroke="#800000" stroke-width="2" />
<line x1="220" y1="359" x2="220" y2="392" stroke="#003c00" stroke-width="2" />
<line x1="195.2" y1="310" x2="244.8" y2="310" stroke="#800000" stroke-width="2" />
<line x1="195.2" y1="343" x2="244.8" y2="343" stroke="#800000" stroke-width="2" />
<rect x="203" y="318" width="33" height="17" fill="#c8c8aa" stroke="#800000" stroke-width="1.8"/>
<circle cx="73.2" cy="392.3" r="3.9" fill="#003c00"/>
<circle cx="220.2" cy="261.3" r="3.9" fill="#003c00"/>
<circle cx="220.2" cy="392.3" r="3.9" fill="#003c00"/>
<polyline points="301,441 171,441 171,473" fill="none" stroke="#003c00" stroke-width="2" stroke-linejoin="miter"/>
<line x1="171" y1="473" x2="171" y2="490" stroke="#800000" stroke-width="2" />
<rect x="164" y="489.5" width="13.2" height="49.5" fill="#c8c8aa" stroke="#800000" stroke-width="1.8"/>
<line x1="171" y1="539" x2="171" y2="555" stroke="#800000" stroke-width="2" />
<line x1="171" y1="555" x2="171" y2="587" stroke="#003c00" stroke-width="2" />
<line x1="154" y1="587" x2="188" y2="587" stroke="#003c00" stroke-width="2" />
<line x1="163" y1="596" x2="180" y2="596" stroke="#003c00" stroke-width="2" />
<line x1="169" y1="604" x2="173" y2="604" stroke="#003c00" stroke-width="2" />
<line x1="122" y1="457" x2="171" y2="457" stroke="#003c00" stroke-width="2" />
<circle cx="171.2" cy="457.3" r="3.9" fill="#003c00"/>
<line x1="102.5" y1="457" x2="122" y2="457" stroke="#800000" stroke-width="2" />
<line x1="57" y1="457" x2="75.6" y2="457" stroke="#800000" stroke-width="2" />
<line x1="8" y1="457" x2="57" y2="457" stroke="#003c00" stroke-width="2" />
<polygon points="24,449.5 9.2,457 24,464.8" fill="none" stroke="#003c00" stroke-width="2" stroke-linejoin="miter"/>
<rect x="76.2" y="441" width="7.9" height="32" fill="#c8c8aa" stroke="#800000" stroke-width="1.8"/>
<defs><clipPath id="hc"><rect x="94.2" y="441" width="7.9" height="32"/></clipPath></defs>
<rect x="94.2" y="441" width="7.9" height="32" fill="#c8c8aa"/>
<g clip-path="url(#hc)">
<line x1="93.0" y1="435.17" x2="103.5" y2="427.19" stroke="#800000" stroke-width="2.3" />
<line x1="93.0" y1="442.47" x2="103.5" y2="434.49" stroke="#800000" stroke-width="2.3" />
<line x1="93.0" y1="449.77" x2="103.5" y2="441.79" stroke="#800000" stroke-width="2.3" />
<line x1="93.0" y1="457.07" x2="103.5" y2="449.09" stroke="#800000" stroke-width="2.3" />
<line x1="93.0" y1="464.37" x2="103.5" y2="456.39" stroke="#800000" stroke-width="2.3" />
<line x1="93.0" y1="471.67" x2="103.5" y2="463.69" stroke="#800000" stroke-width="2.3" />
<line x1="93.0" y1="478.97" x2="103.5" y2="470.99" stroke="#800000" stroke-width="2.3" />
</g>
<rect x="94.2" y="441" width="7.9" height="32" fill="none" stroke="#800000" stroke-width="1.8"/>
<polyline points="301,555 269,555 269,506" fill="none" stroke="#003c00" stroke-width="2" stroke-linejoin="miter"/>
<polygon points="261.5,522 269,507.2 277,522" fill="none" stroke="#003c00" stroke-width="2" stroke-linejoin="miter"/>
<circle cx="724.5" cy="441.5" r="4.6" fill="none" stroke="#1010d8" stroke-width="1.3"/>
<line x1="716.0" y1="441.5" x2="733.0" y2="441.5" stroke="#1010d8" stroke-width="1" />
<line x1="724.5" y1="433.0" x2="724.5" y2="450.0" stroke="#1010d8" stroke-width="1" />
<text transform="translate(331.5,305.5) scale(0.946,1)" font-size="20.5" fill="#000" text-anchor="start"  stroke="#000" stroke-width="0.35">U1</text>
<text transform="translate(513.15,159.4) scale(0.9833,1)" font-size="20.5" fill="#000" text-anchor="start"  stroke="#000" stroke-width="0.35">RV1</text>
<text transform="translate(136.69,240.5) scale(0.9737,1)" font-size="20.5" fill="#000" text-anchor="start"  stroke="#000" stroke-width="0.35">C2</text>
<text transform="translate(136.69,370.4) scale(0.9685,1)" font-size="20.5" fill="#000" text-anchor="start"  stroke="#000" stroke-width="0.35">C3</text>
<text transform="translate(253.92,327.3) scale(1.0357,1)" font-size="20.5" fill="#000" text-anchor="start"  stroke="#000" stroke-width="0.35">X1</text>
<text transform="translate(71.96,435.0) scale(1.0034,1)" font-size="20.5" fill="#000" text-anchor="start"  stroke="#000" stroke-width="0.35">C1</text>
<text transform="translate(186.82,506.1) scale(1.0005,1)" font-size="20.5" fill="#000" text-anchor="start"  stroke="#000" stroke-width="0.35">R1</text>
<text transform="translate(657.39,272.5) scale(0.9596,1)" font-size="20.5" fill="#000" text-anchor="start"  stroke="#000" stroke-width="0.35">RP1</text>
<text transform="translate(657.34,10.6) scale(0.985,1)" font-size="20.5" fill="#000" text-anchor="start"  stroke="#000" stroke-width="0.35">LCD1</text>
<text transform="translate(137.0,291.9) scale(0.97,1)" font-size="13.3" fill="#000" text-anchor="start" stroke="#000" stroke-width="0.15" >30p</text>
<text transform="translate(137.3,307.9) scale(0.913,1)" font-size="13.3" fill="#858585" text-anchor="start"  stroke="#858585" stroke-width="0.1">&lt;TEXT&gt;</text>
<text transform="translate(137.0,421.9) scale(0.97,1)" font-size="13.3" fill="#000" text-anchor="start" stroke="#000" stroke-width="0.15" >30p</text>
<text transform="translate(137.3,438.2) scale(0.913,1)" font-size="13.3" fill="#858585" text-anchor="start"  stroke="#858585" stroke-width="0.1">&lt;TEXT&gt;</text>
<text transform="translate(222.3,378.9) scale(0.97,1)" font-size="13.3" fill="#000" text-anchor="start" stroke="#000" stroke-width="0.15" >12M</text>
<text transform="translate(255.0,362.5) scale(0.913,1)" font-size="13.3" fill="#858585" text-anchor="start"  stroke="#858585" stroke-width="0.1">&lt;TEXT&gt;</text>
<text transform="translate(72.0,487.9) scale(0.915,1)" font-size="13.3" fill="#000" text-anchor="start" stroke="#000" stroke-width="0.15" >10uF</text>
<text transform="translate(72.4,503.7) scale(0.913,1)" font-size="13.3" fill="#858585" text-anchor="start"  stroke="#858585" stroke-width="0.1">&lt;TEXT&gt;</text>
<text transform="translate(187.8,525.4) scale(0.97,1)" font-size="13.3" fill="#000" text-anchor="start" stroke="#000" stroke-width="0.15" >10k</text>
<text transform="translate(187.4,541.4) scale(0.913,1)" font-size="13.3" fill="#858585" text-anchor="start"  stroke="#858585" stroke-width="0.1">&lt;TEXT&gt;</text>
<text transform="translate(513.0,211.0) scale(0.97,1)" font-size="13.3" fill="#000" text-anchor="start" stroke="#000" stroke-width="0.15" >10K</text>
<text transform="translate(546.2,211.0) scale(0.913,1)" font-size="13.3" fill="#858585" text-anchor="start"  stroke="#858585" stroke-width="0.1">&lt;TEXT&gt;</text>
<text transform="translate(331.2,764.1) scale(0.93,1)" font-size="13.3" fill="#000" text-anchor="start" stroke="#000" stroke-width="0.15" >80C51</text>
<text transform="translate(332.6,781.1) scale(0.913,1)" font-size="13.3" fill="#858585" text-anchor="start"  stroke="#858585" stroke-width="0.1">&lt;TEXT&gt;</text>
<text transform="translate(657.4,471.1) scale(0.98,1)" font-size="13.3" fill="#000" text-anchor="start" stroke="#000" stroke-width="0.15" >RESPACK-8</text>
<text transform="translate(657.4,488.2) scale(0.913,1)" font-size="13.3" fill="#858585" text-anchor="start"  stroke="#858585" stroke-width="0.1">&lt;TEXT&gt;</text>
<text transform="translate(657.9,30.2) scale(0.913,1)" font-size="13.3" fill="#858585" text-anchor="start"  stroke="#858585" stroke-width="0.1">&lt;TEXT&gt;</text>
<text transform="translate(706.0,30.2) scale(0.974,1)" font-size="13.3" fill="#000" text-anchor="start" stroke="#000" stroke-width="0.15" >LM016L</text>
</g>
</svg>
</body></html>
